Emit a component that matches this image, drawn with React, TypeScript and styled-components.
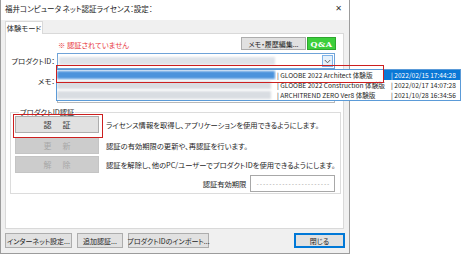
import styled, { createGlobalStyle } from "styled-components";

const GlobalStyle = createGlobalStyle`
  html, body {
    margin: 0;
    padding: 0;
    background: #ffffff;
  }
  body {
    font-family: "Noto Sans CJK JP", "Noto Sans", sans-serif;
    font-size: 7.3px;
    font-feature-settings: "palt";
    color: #1e1e1e;
  }
  * {
    box-sizing: border-box;
  }
`;

const entries = [
  { name: "GLOOBE 2022 Architect 体験版", date: "2022/02/15 17:44:28", selected: true },
  { name: "GLOOBE 2022 Construction 体験版", date: "2022/02/17 14:07:28", selected: false },
  { name: "ARCHITREND ZERO Ver8 体験版", date: "2021/10/28 16:34:56", selected: false },
];

const actions = [
  { label: ["認", "証"], text: "ライセンス情報を取得し、アプリケーションを使用できるようにします。", enabled: true, gap: 0 },
  { label: ["更", "新"], text: "認証の有効期限の更新や、再認証を行います。", enabled: false, gap: 4 },
  { label: ["解", "除"], text: "認証を解除し、他のPC/ユーザーでプロダクトIDを使用できるようにします。", enabled: false, gap: 2 },
];

export default function App() {
  return (
    <>
      <GlobalStyle />
      <Window>
        <TitleBar>
          <span>福井コンピュータ ネット認証ライセンス：設定：</span>
          <CloseX>✕</CloseX>
        </TitleBar>
        <Body>
          <TabStrip>
            <Tab>体験モード</Tab>
          </TabStrip>
          <Panel>
            <FormGrid>
              <span />
              <TopLine>
                <Warning>※ 認証されていません</Warning>
                <TopButtons>
                  <Button $w={65}>メモ・履歴編集...</Button>
                  <QaButton>Q&amp;A</QaButton>
                </TopButtons>
              </TopLine>

              <FieldLabel>プロダクトID：</FieldLabel>
              <Combo>
                <BlurBar $w={216} $color="#dfe3e8" />
                <ComboArrow>
                  <svg width="7" height="5" viewBox="0 0 7 5">
                    <path d="M0.8 1 L3.5 3.8 L6.2 1" fill="none" stroke="#555" strokeWidth="0.9" />
                  </svg>
                </ComboArrow>
              </Combo>

              <FieldLabel $top={4}>メモ：</FieldLabel>
              <MemoBox />
            </FormGrid>

            <Group>
              <Legend>プロダクトID認証</Legend>
              {actions.map((a) => (
                <ActionRow key={a.text} $gap={a.gap}>
                  <ActionButton disabled={!a.enabled}>
                    <span>{a.label[0]}</span>
                    <span>{a.label[1]}</span>
                    {a.enabled && <Highlight $l={-3} $t={-3} $w={90} $h={24} />}
                  </ActionButton>
                  <span>{a.text}</span>
                </ActionRow>
              ))}
              <ExpiryRow>
                <span>認証有効期限</span>
                <ExpiryBox>-----------------------</ExpiryBox>
              </ExpiryRow>
            </Group>

            <DropList>
              {entries.map((e) => (
                <ListRow key={e.date}>
                  <BlurCell>
                    <BlurBar
                      $w={e.selected ? 218 : 214}
                      $color={e.selected ? "#4b93dc" : "#d9dde2"}
                    />
                  </BlurCell>
                  <NameCell>| {e.name}</NameCell>
                  <DateCell $selected={e.selected}>| {e.date}</DateCell>
                </ListRow>
              ))}
            </DropList>
            <Highlight $l={50} $t={31} $w={328} $h={18} />
          </Panel>
          <Footer>
            <Button $w={67}>インターネット設定...</Button>
            <Button $w={46}>追加認証...</Button>
            <Button $w={81}>プロダクトIDのインポート...</Button>
            <Spacer />
            <DefaultButton $w={51}>閉じる</DefaultButton>
          </Footer>
        </Body>
      </Window>
    </>
  );
}

const Window = styled.div`
  width: 350px;
  height: 254px;
  background: #f0f0f0;
  border: 1px solid #9c9c9c;
  border-top: none;
  display: flex;
  flex-direction: column;
`;

const TitleBar = styled.div`
  height: 20px;
  background: #ffffff;
  display: flex;
  align-items: center;
  justify-content: space-between;
  padding: 0 7px 4px 4px;
  font-size: 7.5px;
  color: #222;
`;

const CloseX = styled.span`
  font-family: "DejaVu Sans", sans-serif;
  font-size: 8px;
  color: #333;
`;

const Body = styled.div`
  flex: 1;
  display: flex;
  flex-direction: column;
  padding: 1px 5px 0 4px;
`;

const TabStrip = styled.div`
  display: flex;
  height: 12px;
`;

const Tab = styled.div`
  width: 38px;
  height: 13px;
  background: #ffffff;
  border: 1px solid #d9d9d9;
  border-bottom: none;
  display: flex;
  align-items: center;
  justify-content: center;
  position: relative;
  z-index: 1;
`;

const Panel = styled.div`
  position: relative;
  height: 196px;
  background: #ffffff;
  border: 1px solid #d9d9d9;
  padding: 3px 5px 0 0;
`;

const FormGrid = styled.div`
  display: grid;
  grid-template-columns: 51px 280px;
  grid-template-rows: 13px 16px 31px;
  row-gap: 3px;
  align-items: start;
`;

const TopLine = styled.div`
  display: flex;
  justify-content: space-between;
  align-items: center;
  height: 13px;
`;

const Warning = styled.span`
  color: #e8383d;
  margin-left: 1px;
  margin-top: 2px;
`;

const TopButtons = styled.div`
  display: flex;
  gap: 1px;
  margin-right: 1px;
`;

const Button = styled.button<{ $w: number }>`
  width: ${({ $w }) => $w}px;
  height: 15px;
  padding: 0;
  font: inherit;
  font-size: 7px;
  color: #1e1e1e;
  background: #e1e1e1;
  border: 1px solid #adadad;
  display: flex;
  align-items: center;
  justify-content: center;
  white-space: nowrap;
  ${TopButtons} & {
    height: 13px;
  }
`;

const DefaultButton = styled(Button)`
  border-color: #0078d7;
  box-shadow: inset 0 0 0 1px #0078d7;
`;

const QaButton = styled.button`
  width: 29px;
  height: 13px;
  padding: 0;
  background: #3ccf3c;
  border: 1px solid #2ea52e;
  color: #ffffff;
  font-family: "DejaVu Serif", serif;
  font-weight: bold;
  font-size: 8px;
  letter-spacing: 0.5px;
  display: flex;
  align-items: center;
  justify-content: center;
`;

const FieldLabel = styled.span<{ $top?: number }>`
  text-align: right;
  padding-right: 2px;
  padding-top: ${({ $top }) => $top ?? 3}px;
  white-space: nowrap;
`;

const Combo = styled.div`
  width: 278px;
  height: 16px;
  border: 1px solid #6fa3d8;
  background: #ffffff;
  display: flex;
  align-items: center;
  justify-content: space-between;
  padding: 0 1px 0 1px;
`;

const ComboArrow = styled.div`
  width: 11px;
  height: 12px;
  border: 1px solid #7eb4ea;
  background: #e5f1fb;
  display: flex;
  align-items: center;
  justify-content: center;
`;

const BlurBar = styled.div<{ $w: number; $color: string }>`
  width: ${({ $w }) => $w}px;
  height: 8px;
  background: ${({ $color }) => $color};
  filter: blur(1.2px);
`;

const MemoBox = styled.div`
  width: 278px;
  height: 31px;
  border: 1px solid #b9b9b9;
  background: #ffffff;
`;

const Group = styled.fieldset`
  margin: 5px 0 0 4px;
  width: 327px;
  height: 86px;
  border: 1px solid #dcdcdc;
  padding: 0 5px 0 4px;
`;

const Legend = styled.legend`
  padding: 0 1px;
  margin-left: 4px;
  line-height: 8px;
`;

const ActionRow = styled.div<{ $gap: number }>`
  display: flex;
  align-items: center;
  gap: 7px;
  margin-top: ${({ $gap }) => $gap}px;
  white-space: nowrap;
`;

const ActionButton = styled.button`
  position: relative;
  width: 84px;
  height: 17px;
  padding: 0;
  font: inherit;
  font-size: 8px;
  background: #e1e1e1;
  border: 1px solid #adadad;
  color: #333;
  display: flex;
  align-items: center;
  justify-content: center;
  gap: 11px;
  &:disabled {
    background: #cccccc;
    border-color: #c4c4c4;
    color: #a8a8a8;
  }
`;

const Highlight = styled.div<{ $l: number; $t: number; $w: number; $h: number }>`
  position: absolute;
  left: ${({ $l }) => $l}px;
  top: ${({ $t }) => $t}px;
  width: ${({ $w }) => $w}px;
  height: ${({ $h }) => $h}px;
  border: 1.5px solid #cc1f1f;
  pointer-events: none;
  z-index: 3;
`;

const ExpiryRow = styled.div`
  display: flex;
  justify-content: flex-end;
  align-items: center;
  gap: 4px;
  margin-top: 2px;
`;

const ExpiryBox = styled.div`
  width: 85px;
  height: 17px;
  border: 1px solid #a8a8a8;
  background: #ffffff;
  color: #8a8a8a;
  display: flex;
  align-items: center;
  justify-content: center;
  font-family: "DejaVu Sans Mono", monospace;
  font-size: 5.5px;
  letter-spacing: -0.1px;
`;

const DropList = styled.div`
  position: absolute;
  left: 50px;
  top: 35px;
  width: 405px;
  height: 32px;
  background: #ffffff;
  border: 1px solid #5b9bd8;
  z-index: 2;
`;

const ListRow = styled.div`
  display: grid;
  grid-template-columns: 219px 108px 1fr;
  height: 10px;
  align-items: center;
  white-space: nowrap;
  font-size: 6.6px;
`;

const BlurCell = styled.div`
  height: 10px;
  display: flex;
  align-items: center;
  overflow: hidden;
`;

const NameCell = styled.div`
  padding-left: 1px;
  height: 10px;
  line-height: 10px;
  overflow: visible;
`;

const DateCell = styled.div<{ $selected: boolean }>`
  height: 10px;
  line-height: 10px;
  padding-left: 7px;
  background: ${({ $selected }) => ($selected ? "#0a78d6" : "transparent")};
  color: ${({ $selected }) => ($selected ? "#ffffff" : "#1e1e1e")};
`;

const Footer = styled.div`
  display: flex;
  gap: 5px;
  margin-top: 4px;
  margin-right: -1px;
`;

const Spacer = styled.div`
  flex: 1;
`;
